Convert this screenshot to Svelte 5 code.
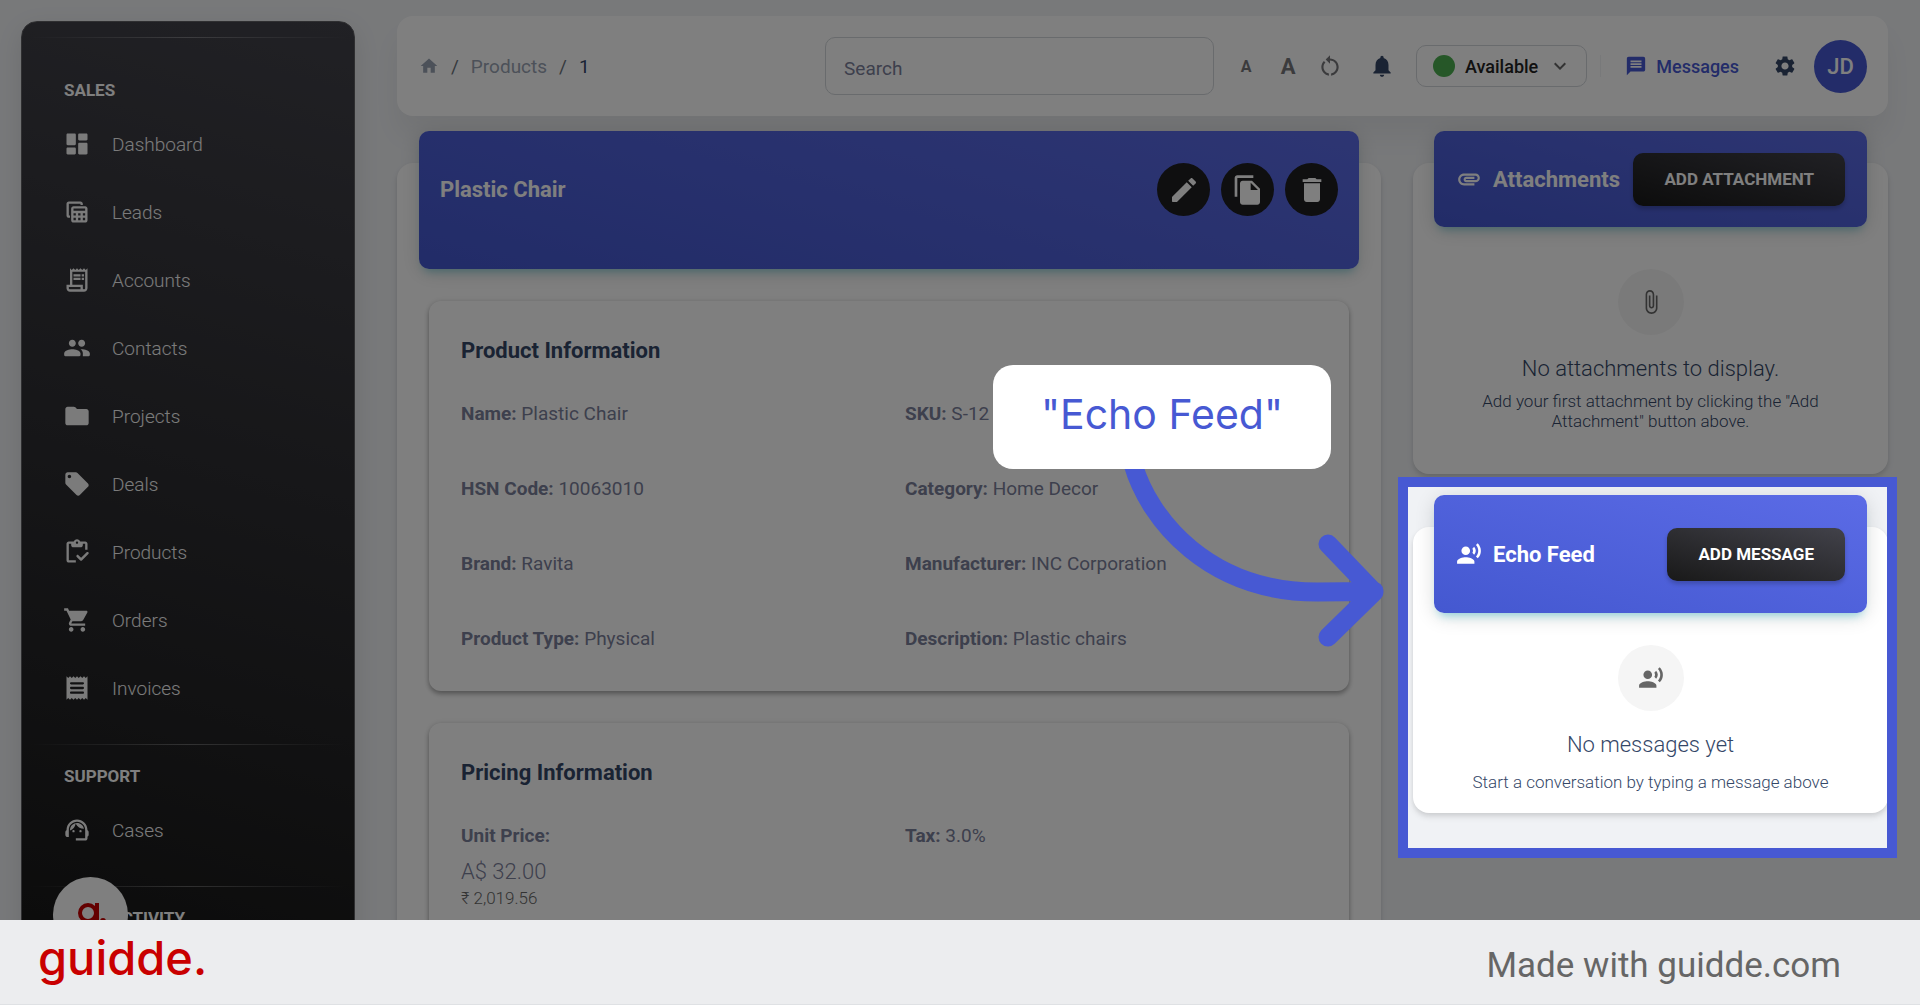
<script>
  const P = {
    dashboard: 'M4 13h6c.55 0 1-.45 1-1V4c0-.55-.45-1-1-1H4c-.55 0-1 .45-1 1v8c0 .55.45 1 1 1zm0 8h6c.55 0 1-.45 1-1v-4c0-.55-.45-1-1-1H4c-.55 0-1 .45-1 1v4c0 .55.45 1 1 1zm10 0h6c.55 0 1-.45 1-1v-8c0-.55-.45-1-1-1h-6c-.55 0-1 .45-1 1v8c0 .55.45 1 1 1zM13 4v4c0 .55.45 1 1 1h6c.55 0 1-.45 1-1V4c0-.55-.45-1-1-1h-6c-.55 0-1 .45-1 1z',
    leads: 'M19 7H9c-1.100 0-2 .9-2 2v10c0 1.100.9 2 2 2h10c1.100 0 2-.9 2-2V9c0-1.100-.9-2-2-2zm0 2v2H9V9h10zm-6 6v-2h2v2h-2zm2 2v2h-2v-2h2zm-4-2H9v-2h2v2zm6-2h2v2h-2v-2zm-8 4h2v2H9v-2zm8 2v-2h2v2h-2zM6 17H5c-1.100 0-2-.9-2-2V5c0-1.100.9-2 2-2h10c1.100 0 2 .9 2 2v1h-2V5H5v10h1v2z',
    accounts: 'M19.500 3.500 18 2l-1.500 1.500L15 2l-1.500 1.500L12 2l-1.500 1.500L9 2 7.500 3.500 6 2v14H3v3c0 1.660 1.340 3 3 3h12c1.660 0 3-1.340 3-3V2l-1.500 1.500zM15 20H6c-.55 0-1-.45-1-1v-1h10v2zm4-1c0 .55-.45 1-1 1s-1-.45-1-1v-3H8V5h11v14zM9 7h6v2H9zM16 7h2v2h-2zM9 10h6v2H9zM16 10h2v2h-2z',
    contacts: 'M16 11c1.660 0 2.990-1.340 2.990-3S17.660 5 16 5s-3 1.340-3 3 1.340 3 3 3zm-8 0c1.660 0 2.990-1.340 2.990-3S9.660 5 8 5 5 6.340 5 8s1.340 3 3 3zm0 2c-2.330 0-7 1.170-7 3.500V18c0 .55.45 1 1 1h12c.55 0 1-.45 1-1v-1.500c0-2.330-4.670-3.500-7-3.500zm8 0c-.29 0-.62.020-.97.050 1.160.84 1.970 1.970 1.970 3.450V19h5c.55 0 1-.45 1-1v-1.500c0-2.330-4.670-3.500-7-3.500z',
    projects: 'M10.590 4.590C10.210 4.210 9.700 4 9.170 4H4c-1.100 0-1.990.9-1.990 2L2 18c0 1.100.9 2 2 2h16c1.100 0 2-.9 2-2V8c0-1.100-.9-2-2-2h-8l-1.410-1.410z',
    deals: 'm21.410 11.580-9-9C12.050 2.220 11.550 2 11 2H4c-1.100 0-2 .9-2 2v7c0 .55.22 1.050.59 1.420l9 9c.36.36.86.58 1.410.58s1.050-.22 1.410-.59l7-7c.37-.36.59-.86.59-1.410s-.23-1.060-.59-1.420zM5.500 7C4.670 7 4 6.330 4 5.500S4.670 4 5.500 4 7 4.670 7 5.500 6.330 7 5.500 7z',
    products: 'M5 5h2v1c0 1.100.9 2 2 2h6c1.100 0 2-.9 2-2V5h2v5h2V5c0-1.100-.9-2-2-2h-4.180C14.400 1.840 13.300 1 12 1s-2.400.84-2.820 2H5c-1.100 0-2 .9-2 2v14c0 1.100.9 2 2 2h6v-2H5V5zm7-2c.55 0 1 .45 1 1s-.45 1-1 1-1-.45-1-1 .45-1 1-1zM21.750 12.250c-.41-.41-1.090-.41-1.500 0L15.510 17l-2.260-2.250c-.41-.41-1.080-.41-1.500 0-.41.41-.41 1.090 0 1.500l3.050 3.040c.39.39 1.020.39 1.410 0l5.530-5.540c.42-.41.42-1.080.010-1.500z',
    orders: 'M7 18c-1.100 0-1.990.9-1.990 2S5.900 22 7 22s2-.9 2-2-.9-2-2-2zM1 2v2h2l3.600 7.590-1.350 2.450c-.16.28-.25.61-.25.96 0 1.100.9 2 2 2h12v-2H7.420c-.14 0-.25-.11-.25-.25l.030-.12.9-1.630h7.450c.75 0 1.410-.41 1.750-1.030l3.580-6.490c.08-.14.12-.31.12-.48 0-.55-.45-1-1-1H5.210l-.94-2H1zm16 16c-1.100 0-1.990.9-1.990 2s.89 2 1.990 2 2-.9 2-2-.9-2-2-2z',
    invoices: 'M19.500 3.500 18 2l-1.500 1.500L15 2l-1.500 1.500L12 2l-1.500 1.500L9 2 7.500 3.500 6 2 4.500 3.500 3 2v20l1.500-1.500L6 22l1.500-1.500L9 22l1.500-1.500L12 22l1.500-1.500L15 22l1.500-1.500L18 22l1.500-1.500L21 22V2l-1.500 1.500zM17 17H7c-.55 0-1-.45-1-1s.45-1 1-1h10c.55 0 1 .45 1 1s-.45 1-1 1zm0-4H7c-.55 0-1-.45-1-1s.45-1 1-1h10c.55 0 1 .45 1 1s-.45 1-1 1zm0-4H7c-.55 0-1-.45-1-1s.45-1 1-1h10c.55 0 1 .45 1 1s-.45 1-1 1z',
    cases: 'M21 12.220C21 6.730 16.740 3 12 3c-4.690 0-9 3.650-9 9.280-.6.34-1 .98-1 1.720v2c0 1.100.9 2 2 2h1v-6.100c0-3.870 3.130-7 7-7s7 3.130 7 7V19h-8v2h8c1.100 0 2-.9 2-2v-1.220c.59-.31 1-.92 1-1.640v-2.300c0-.7-.41-1.310-1-1.620zM9 12a1 1 0 1 0 0 2 1 1 0 0 0 0-2zM15 12a1 1 0 1 0 0 2 1 1 0 0 0 0-2zM18 11.030C17.520 8.180 15.040 6 12.050 6c-3.030 0-6.290 2.510-6.030 6.450 2.470-1.010 4.330-3.210 4.860-5.890 1.310 2.630 4 4.440 7.120 4.470z',
    home: 'M10 20v-6h4v6h5v-8h3L12 3 2 12h3v8z',
    reset: 'M12 5V2L8 6l4 4V7c3.310 0 6 2.690 6 6 0 2.970-2.170 5.430-5 5.910v2.020c3.950-.49 7-3.850 7-7.930 0-4.420-3.580-8-8-8zM6 13c0-1.650.67-3.150 1.760-4.240L6.340 7.340C4.900 8.790 4 10.790 4 13c0 4.080 3.050 7.440 7 7.930v-2.020c-2.830-.48-5-2.940-5-5.910z',
    bell: 'M12 22c1.100 0 2-.9 2-2h-4c0 1.100.89 2 2 2zm6-6v-5c0-3.070-1.640-5.640-4.500-6.320V4c0-.83-.67-1.500-1.500-1.500s-1.500.67-1.500 1.500v.68C7.630 5.360 6 7.920 6 11v5l-2 2v1h16v-1l-2-2z',
    chevron: 'M7.410 8.590 12 13.170l4.590-4.580L18 10l-6 6-6-6z',
    chat: 'M20 2H4c-1.100 0-1.990.9-1.990 2L2 22l4-4h14c1.100 0 2-.9 2-2V4c0-1.100-.9-2-2-2zM6 9h12v2H6V9zm12 5H6v-2h12v2zm0-6H6V6h12v2z',
    gear: 'M19.140 12.940c.04-.3.060-.61.060-.94 0-.32-.020-.64-.070-.94l2.030-1.580c.18-.14.23-.41.12-.61l-1.920-3.320c-.12-.22-.37-.29-.59-.22l-2.390.96c-.5-.38-1.030-.7-1.620-.94l-.36-2.540c-.04-.24-.24-.41-.48-.41h-3.840c-.24 0-.43.17-.47.41l-.36 2.540c-.59.24-1.130.57-1.620.94l-2.390-.96c-.22-.08-.47 0-.59.22L2.740 8.870c-.12.21-.08.47.12.61l2.030 1.580c-.05.3-.09.63-.09.94s.020.64.070.94l-2.030 1.580c-.18.14-.23.41-.12.61l1.920 3.320c.12.22.37.29.59.22l2.390-.96c.5.38 1.030.7 1.620.94l.36 2.540c.05.24.24.41.48.41h3.840c.24 0 .44-.17.47-.41l.36-2.540c.59-.24 1.130-.56 1.620-.94l2.390.96c.22.08.47 0 .59-.22l1.920-3.320c.12-.22.070-.47-.12-.61l-2.010-1.580zM12 15.600c-1.980 0-3.600-1.620-3.600-3.600s1.620-3.600 3.600-3.600 3.600 1.620 3.600 3.600-1.620 3.600-3.600 3.600z',
    edit: 'M3 17.460v3.040c0 .28.22.5.5.5h3.040c.13 0 .26-.05.35-.15L17.810 9.940l-3.750-3.750L3.150 17.100c-.1.100-.15.220-.15.360zM20.710 7.040c.39-.39.39-1.020 0-1.410l-2.340-2.340c-.39-.39-1.020-.39-1.410 0l-1.830 1.830 3.750 3.750 1.830-1.830z',
    copy: 'M16 1H4c-1.100 0-2 .9-2 2v14h2V3h12V1zm-1 4 6 6v10c0 1.100-.9 2-2 2H7.990C6.890 23 6 22.100 6 21l.010-14c0-1.100.89-2 1.990-2h7zm-1 7h5.500L14 6.500V12z',
    trash: 'M6 19c0 1.100.9 2 2 2h8c1.100 0 2-.9 2-2V7H6v12zM19 4h-3.500l-1-1h-5l-1 1H5v2h14V4z',
    clip: 'M2 12.500C2 9.460 4.460 7 7.500 7H18c2.210 0 4 1.790 4 4s-1.790 4-4 4H9.500C8.120 15 7 13.880 7 12.500S8.120 10 9.500 10H17v2H9.410c-.55 0-.55 1 0 1H18c1.100 0 2-.9 2-2s-.9-2-2-2H7.500C5.570 9 4 10.570 4 12.500S5.570 16 7.500 16H17v2H7.500C4.460 18 2 15.540 2 12.500z',
    clipUp: 'M16.500 6v11.500c0 2.210-1.790 4-4 4s-4-1.790-4-4V5c0-1.380 1.120-2.500 2.500-2.500s2.500 1.120 2.500 2.500v10.500c0 .55-.45 1-1 1s-1-.45-1-1V6H10v9.500c0 1.380 1.120 2.500 2.500 2.500s2.500-1.120 2.500-2.500V5c0-2.210-1.790-4-4-4S7 2.790 7 5v12.500c0 3.040 2.460 5.500 5.500 5.500s5.500-2.460 5.500-5.500V6h-1.500z',
    voice: 'M9 5a4 4 0 1 0 0 8 4 4 0 0 0 0-8zM9 15c-2.670 0-8 1.340-8 4v2h16v-2c0-2.660-5.330-4-8-4zM16.760 5.360l-1.680 1.690c.84 1.180.84 2.710 0 3.890l1.680 1.690c2.020-2.020 2.020-5.070 0-7.270zM20.070 2l-1.630 1.630c2.770 3.020 2.770 7.560 0 10.740L20.070 16c3.900-3.890 3.910-9.950 0-14z',
  };
  const sales = [
    ['Dashboard', P.dashboard], ['Leads', P.leads], ['Accounts', P.accounts],
    ['Contacts', P.contacts], ['Projects', P.projects], ['Deals', P.deals],
    ['Products', P.products], ['Orders', P.orders], ['Invoices', P.invoices],
  ];
  const info = [
    ['Name', 'Plastic Chair'], ['SKU', 'S-12'],
    ['HSN Code', '10063010'], ['Category', 'Home Decor'],
    ['Brand', 'Ravita'], ['Manufacturer', 'INC Corporation'],
    ['Product Type', 'Physical'], ['Description', 'Plastic chairs'],
  ];
</script>

{#snippet icon(d, size)}
  <svg class="icon" width={size} height={size} viewBox="0 0 24 24" aria-hidden="true"><path {d} fill-rule="evenodd" /></svg>
{/snippet}

<div class="page">
  <div class="stage">
    <nav class="sidebar" aria-label="Main">
      <hr />
      <h2 class="first">Sales</h2>
      <ul>
        {#each sales as [label, d]}
          <li><a href="#{label}">{@render icon(d, 28)}<span>{label}</span></a></li>
        {/each}
      </ul>
      <hr />
      <h2>Support</h2>
      <ul>
        <li><a href="#Cases">{@render icon(P.cases, 28)}<span>Cases</span></a></li>
      </ul>
      <hr />
      <h2>User Activity</h2>
      <button class="bubble" aria-label="Open guide">
        <svg width="30" height="30" viewBox="0 0 30 30" aria-hidden="true">
          <circle cx="12" cy="13" r="8" /><path d="M21 3v16a8 8 0 0 1-14 5" /><circle class="dot" cx="27" cy="21" r="3" />
        </svg>
      </button>
    </nav>

    <main>
      <header class="topbar">
        <nav class="crumbs" aria-label="Breadcrumb">
          <a href="#home" aria-label="Home">{@render icon(P.home, 20)}</a>
          <i>/</i><a href="#products">Products</a><i>/</i><b>1</b>
        </nav>
        <input class="search" type="search" placeholder="Search" aria-label="Search" />
        <div class="tools">
          <button class="tool small" aria-label="Smaller text">A</button>
          <button class="tool large" aria-label="Larger text">A</button>
          <button class="tool" aria-label="Reset text size">{@render icon(P.reset, 26)}</button>
          <button class="tool bell" aria-label="Notifications">{@render icon(P.bell, 26)}</button>
          <button class="status"><span class="dot"></span>Available{@render icon(P.chevron, 24)}</button>
          <a class="messages" href="#messages">{@render icon(P.chat, 22)}Messages</a>
          <button class="tool gear" aria-label="Settings">{@render icon(P.gear, 24)}</button>
          <button class="avatar">JD</button>
        </div>
      </header>

      <div class="columns">
        <section class="card product">
          <div class="banner tall">
            <h1>Plastic Chair</h1>
            <div class="actions">
              <button aria-label="Edit">{@render icon(P.edit, 32)}</button>
              <button aria-label="Duplicate">{@render icon(P.copy, 32)}</button>
              <button aria-label="Delete">{@render icon(P.trash, 32)}</button>
            </div>
          </div>
          <div class="panels">
            <section class="panel">
              <h3>Product Information</h3>
              <div class="fields">
                {#each info as [k, v]}
                  <p><b>{k}:</b> {v}</p>
                {/each}
              </div>
            </section>
            <section class="panel">
              <h3>Pricing Information</h3>
              <div class="fields">
                <div>
                  <p><b>Unit Price:</b></p>
                  <p class="price">A$ 32.00</p>
                  <p class="local">₹ 2,019.56</p>
                </div>
                <p><b>Tax:</b> 3.0%</p>
              </div>
            </section>
          </div>
        </section>

        <div class="side">
          <section class="card attachments">
            <div class="banner short">
              {@render icon(P.clip, 26)}
              <h2>Attachments</h2>
              <button class="dark">Add attachment</button>
            </div>
            <div class="empty">
              <span class="disc">{@render icon(P.clipUp, 26)}</span>
              <h4>No attachments to display.</h4>
              <p>Add your first attachment by clicking the "Add Attachment" button above.</p>
            </div>
          </section>

          <section class="card echo">
            <div class="banner">
              {@render icon(P.voice, 26)}
              <h2>Echo Feed</h2>
              <button class="dark">Add message</button>
            </div>
            <div class="empty">
              <span class="disc">{@render icon(P.voice, 26)}</span>
              <h4>No messages yet</h4>
              <p>Start a conversation by typing a message above</p>
            </div>
            <div class="spotlight"></div>
            <svg class="arrow" width="270" height="190" viewBox="0 0 270 190" aria-hidden="true">
              <path d="M14 4C30 60 90 132 198 132Q225 132 255 131M209 84L255 132L209 177" />
            </svg>
            <div class="callout">"Echo Feed"</div>
          </section>
        </div>
      </div>
    </main>
  </div>

  <footer>
    <span class="brand">guidde.</span>
    <span class="made">Made with guidde.com</span>
  </footer>
</div>

<style>
  :global(body) { margin: 0; }
  .page, .page * { box-sizing: border-box; }
  .page {
    height: 100vh;
    display: flex;
    flex-direction: column;
    background: #f0f2f5;
    font-family: Roboto, "Liberation Sans", sans-serif;
    font-weight: 300;
    color: #7b809a;
  }
  h1, h2, h3, h4, p, ul { margin: 0; padding: 0; }
  button, input { font: inherit; color: inherit; border: 0; background: none; padding: 0; margin: 0; }
  a { color: inherit; text-decoration: none; }
  .icon { display: block; flex: none; fill: currentColor; }

  .stage {
    position: relative;
    flex: 1;
    min-height: 0;
    overflow: hidden;
    display: flex;
    align-items: stretch;
    gap: 42px;
    padding: 16px 32px 0 21px;
  }

  .sidebar {
    position: relative;
    flex: none;
    width: 334px;
    height: 1000px;
    margin-top: 5px;
    padding-top: 15px;
    border: 1px solid #5f5f63;
    border-radius: 16px;
    background: linear-gradient(195deg, #42424a, #191919 90%);
    box-shadow: 0 8px 26px rgba(0, 0, 0, 0.1);
    color: #fff;
    overflow: hidden;
  }
  .sidebar hr {
    height: 1px;
    margin: 0 8px;
    border: 0;
    background: linear-gradient(90deg, transparent, rgba(255, 255, 255, 0.3), transparent);
  }
  .sidebar h2 {
    margin: 19px 0 8px 42px;
    font-size: 17px;
    line-height: 24px;
    font-weight: 700;
    text-transform: uppercase;
  }
  .sidebar h2.first { margin-top: 40px; }
  .sidebar ul { list-style: none; padding-bottom: 22px; }
  .sidebar li a {
    display: flex;
    align-items: center;
    gap: 21px;
    height: 68px;
    padding-left: 41px;
    font-size: 19px;
    opacity: 0.96;
  }
  .bubble {
    position: absolute;
    left: 31px;
    top: 855px;
    width: 75px;
    height: 75px;
    border-radius: 50%;
    background: #fff;
    display: grid;
    place-items: center;
  }
  .bubble svg { fill: none; stroke: #c90000; stroke-width: 4; }
  .bubble .dot { fill: #c90000; stroke: none; }

  main { flex: 1; min-width: 0; }
  .topbar {
    display: flex;
    align-items: center;
    height: 100px;
    padding: 0 21px 0 22px;
    border-radius: 16px;
    background: #fff;
    box-shadow: 0 20px 27px rgba(0, 0, 0, 0.05);
  }
  .crumbs { flex: 1; display: flex; align-items: center; gap: 12px; font-size: 19px; color: #99a3b3; font-weight: 400; }
  .crumbs i { font-style: normal; color: #6c757d; }
  .crumbs b { font-weight: 400; color: #344767; }
  .search {
    width: 389px;
    height: 58px;
    padding: 4px 18px 0;
    border: 1px solid #d2d6da;
    border-radius: 10px;
    font-size: 19px;
    font-weight: 400;
  }
  .search::placeholder { color: #7b809a; opacity: 1; }
  .tools { display: flex; align-items: center; margin-left: 16px; }
  .tool { width: 32px; height: 40px; margin-right: 10px; display: grid; place-items: center; color: #77777a; font-weight: 700; }
  .small { font-size: 16px; }
  .large { font-size: 22px; }
  .bell, .gear { color: #344767; }
  .bell { margin: 0 18px 0 10px; }
  .status {
    display: flex;
    align-items: center;
    gap: 10px;
    height: 42px;
    padding: 0 14px 0 16px;
    border: 1px solid #d2d6da;
    border-radius: 10px;
    font-size: 18px;
    font-weight: 500;
    color: #222;
  }
  .status .icon { color: #666; }
  .status .dot { width: 22px; height: 22px; border-radius: 50%; background: #4caf50; }
  .messages {
    display: flex;
    align-items: center;
    gap: 9px;
    margin: 0 30px 0 13px;
    padding-left: 24px;
    border-left: 1px solid #f0f2f5;
    font-size: 18px;
    font-weight: 500;
    color: #4759d3;
  }
  .gear { margin-right: 13px; }
  .avatar { width: 53px; height: 53px; border-radius: 50%; background: #4759d3; color: #fff; font-size: 22px; font-weight: 500; }

  .columns { display: flex; align-items: flex-start; gap: 32px; padding-top: 47px; }
  .card {
    position: relative;
    border-radius: 16px;
    background: #fff;
    box-shadow: 0 4px 6px rgba(0, 0, 0, 0.1), 0 2px 4px rgba(0, 0, 0, 0.06);
  }
  .product { flex: 1; min-width: 0; }
  .side { flex: none; width: 475px; display: flex; flex-direction: column; gap: 53px; }
  .banner {
    display: flex;
    align-items: center;
    gap: 11px;
    height: 118px;
    margin: -32px 21px 32px;
    padding: 0 22px;
    position: relative;
    border-radius: 10px;
    background: linear-gradient(195deg, #5b6be6, #4458d0);
    box-shadow: 0 4px 20px rgba(0, 0, 0, 0.14), 0 7px 10px -5px rgba(0, 187, 212, 0.4);
    color: #fff;
  }
  .banner.short { height: 96px; }
  .banner.tall {
    height: 138px;
    margin: -32px 22px 32px;
    padding: 32px 21px 0;
    align-items: flex-start;
    justify-content: space-between;
  }
  .banner h1, .banner h2 { font-size: 22px; line-height: 53px; font-weight: 700; }
  .banner h2 { flex: 1; }
  .actions { display: flex; gap: 11px; }
  .actions button { width: 53px; height: 53px; border-radius: 50%; display: grid; place-items: center; background: #1e1e20; color: #fff; }
  .dark {
    height: 53px;
    padding: 0 31px;
    border-radius: 10px;
    background: linear-gradient(195deg, #42424a, #191919);
    box-shadow: 0 3px 4px rgba(0, 0, 0, 0.2);
    color: #fff;
    font-size: 17px;
    font-weight: 700;
    text-transform: uppercase;
    white-space: nowrap;
  }

  .panels { display: flex; flex-direction: column; gap: 32px; padding: 0 32px; }
  .panel {
    padding: 32px 32px 40px;
    border-radius: 12px;
    background: #fff;
    box-shadow: 0 3px 5px rgba(0, 0, 0, 0.3), 0 0 6px rgba(0, 0, 0, 0.1);
  }
  h3 { font-size: 22px; line-height: 36px; font-weight: 700; color: #344767; }
  .fields { display: grid; grid-template-columns: 1fr 1fr; gap: 51px 32px; padding-top: 33px; }
  .fields p { font-size: 19px; line-height: 24px; font-weight: 400; }
  .fields b { font-weight: 700; }
  .fields .price { margin-top: 10px; font-size: 22px; line-height: 28px; font-weight: 300; }
  .fields .local { font-size: 17px; line-height: 24px; color: #666; font-weight: 300; }

  .empty { display: flex; flex-direction: column; align-items: center; text-align: center; color: #344767; }
  .disc { width: 66px; height: 66px; border-radius: 50%; display: grid; place-items: center; background: #f5f5f5; color: #666; }
  h4 { margin: 18px 0 6px; font-size: 22px; line-height: 32px; font-weight: 300; }
  .empty p { width: 380px; font-size: 17px; line-height: 20px; }
  .attachments { height: 311px; }
  .attachments .empty { margin-top: 42px; }
  .echo { height: 286px; }
  .echo h4 { margin-bottom: 11px; }

  .spotlight {
    position: absolute;
    z-index: 5;
    inset: -50px -9px -45px -15px;
    border: 10px solid #4759d3;
    box-shadow: 0 0 0 4000px rgba(0, 0, 0, 0.5);
    pointer-events: none;
  }
  .arrow { position: absolute; z-index: 6; top: -67px; left: -294px; fill: none; stroke: #4759d3; stroke-width: 19; stroke-linecap: round; stroke-linejoin: round; }
  .callout {
    position: absolute;
    z-index: 7;
    top: -162px;
    right: 557px;
    width: 338px;
    height: 104px;
    border-radius: 20px;
    background: #fff;
    color: #4759d3;
    font: 400 41px/98px Inter, "Liberation Sans", sans-serif;
    text-align: center;
    white-space: nowrap;
  }

  footer {
    position: relative;
    z-index: 8;
    flex: none;
    height: 85px;
    display: flex;
    justify-content: space-between;
    align-items: center;
    padding: 0 79px 0 38px;
    border-bottom: 1px solid #dfe1e4;
    background: #ecedef;
  }
  .brand { padding-bottom: 8px; font: 500 47px/60px Inter, sans-serif; color: #c90000; }
  .made { padding-top: 8px; font-size: 35px; line-height: 40px; font-weight: 400; color: #666; }
</style>
